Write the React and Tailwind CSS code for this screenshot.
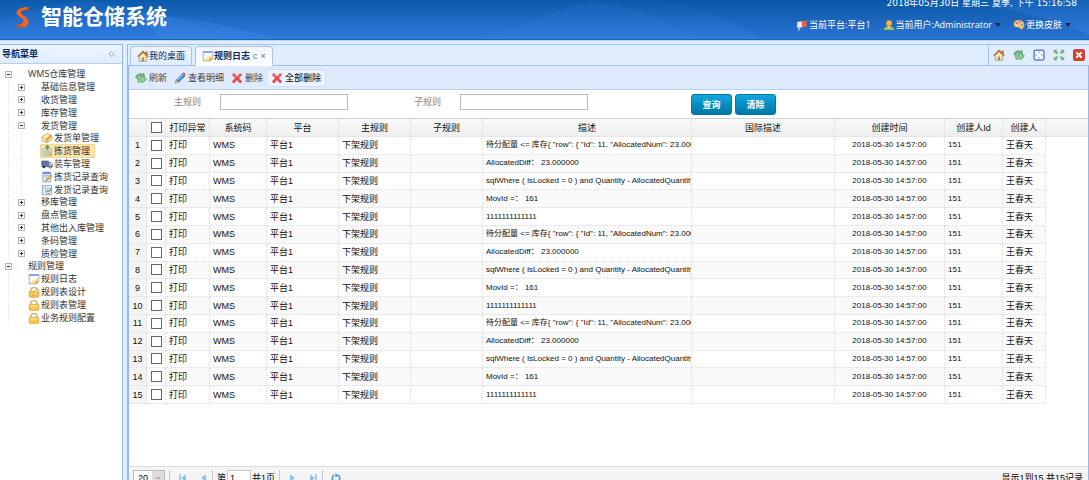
import { ChevronDown, ChevronsLeft } from "lucide-react";

const menu = [
  { level: 0, label: "WMS仓库管理", open: true },
  { level: 1, label: "基础信息管理", open: false },
  { level: 1, label: "收货管理", open: false },
  { level: 1, label: "库存管理", open: false },
  { level: 1, label: "发货管理", open: true },
  { level: 2, label: "发货单管理", icon: TagIcon },
  { level: 2, label: "拣货管理", icon: PickIcon, active: true },
  { level: 2, label: "装车管理", icon: TruckIcon },
  { level: 2, label: "拣货记录查询", icon: EditNoteIcon },
  { level: 2, label: "发货记录查询", icon: ReportIcon },
  { level: 1, label: "移库管理", open: false },
  { level: 1, label: "盘点管理", open: false },
  { level: 1, label: "其他出入库管理", open: false },
  { level: 1, label: "条码管理", open: false },
  { level: 1, label: "质检管理", open: false },
  { level: 0, label: "规则管理", open: true },
  { level: 1, label: "规则日志", icon: NoteIcon },
  { level: 1, label: "规则表设计", icon: LockEditIcon },
  { level: 1, label: "规则表管理", icon: LockIcon },
  { level: 1, label: "业务规则配置", icon: LockIcon },
];

const columns = [
  { key: "print", label: "打印异常", width: "w-[44px]", cell: "pl-[3px]" },
  { key: "system", label: "系统码", width: "w-[57px]", cell: "pl-[3px]" },
  { key: "platform", label: "平台", width: "w-[72px]", cell: "pl-[3px]" },
  { key: "mainRule", label: "主规则", width: "w-[72px]", cell: "pl-[3px]" },
  { key: "subRule", label: "子规则", width: "w-[72px]", cell: "pl-[3px]" },
  { key: "desc", label: "描述", width: "w-[209px]", cell: "pl-[3px] text-[8px]" },
  { key: "intlDesc", label: "国际描述", width: "w-[143px]", cell: "pl-[3px]" },
  { key: "createdAt", label: "创建时间", width: "w-[110px]", cell: "text-center text-[8px]" },
  { key: "creatorId", label: "创建人Id", width: "w-[58px]", cell: "pl-[3px] text-[8px]" },
  { key: "creator", label: "创建人", width: "w-[43px]", cell: "pl-[3px]" },
];

const descriptions = [
  '待分配量 <= 库存{ "row": { "Id": 11, "AllocatedNum": 23.000000, "Quantity": 23.000000 } }',
  "AllocatedDiff： 23.000000",
  "sqlWhere ( IsLocked = 0 ) and Quantity - AllocatedQuantity > 0",
  "MovId =： 161",
  "1111111111111",
];

const rows = Array.from({ length: 15 }, (_, i) => ({
  id: i + 1,
  print: "打印",
  system: "WMS",
  platform: "平台1",
  mainRule: "下架规则",
  subRule: "",
  desc: descriptions[i % 5],
  intlDesc: "",
  createdAt: "2018-05-30 14:57:00",
  creatorId: "151",
  creator: "王春天",
}));

/* ---------- icons ---------- */

function Svg({ children, className = "w-3 h-3" }) {
  return (
    <svg viewBox="0 0 16 16" className={`${className} shrink-0`} fill="none" aria-hidden="true">
      {children}
    </svg>
  );
}

function Logo() {
  return (
    <svg viewBox="0 0 16 22" className="w-4 h-[22px] shrink-0" aria-hidden="true">
      <path
        d="M14 1C9 1 2.500 3 2.500 7c0 3.500 7 4.500 7 8 0 2.500-3.500 3.500-8.500 4.500 1.500 1 5 1.500 7.500 1.500 4 0 6-2 6-5.500C14.500 11 7 9.500 7 6.500 7 4.500 11 4 13.500 3.500z"
        fill="#f2641c"
      />
      <path d="M14.500 0v6l-3-3zM1 19.500c3-.8 5-1 7-.5l2 2.500c-4 .3-7-.5-9-2z" fill="#e2520f" />
    </svg>
  );
}

function HomeIcon() {
  return (
    <Svg>
      <path d="M3 8.500 8 3.500l5 5V15H3z" fill="#fbe6b5" stroke="#b98d4c" />
      <path d="M1 9 8 2l7 7" stroke="#a8752f" strokeWidth="2" />
      <path d="M11.500 2h2.500v4.500l-2.500-2z" fill="#c0563f" />
      <path d="M6.500 10h3v5h-3z" fill="#7e8fbe" />
    </Svg>
  );
}

function RefreshIcon() {
  return (
    <Svg>
      <path d="M1 7.500C1.500 3 6.500 1 10 3l1.500-1.500 1.500 5.500-6 .3 1.500-1.600C6.500 4.800 4.500 5.500 4 8z" fill="#74bd78" stroke="#438f4d" strokeWidth=".8" />
      <path d="M15 8.500c-.5 4.500-5.500 6.500-9 4.500l-1.500 1.500L3 9l6-.3-1.500 1.600c2 .9 4 .2 4.500-2.300z" fill="#93d195" stroke="#438f4d" strokeWidth=".8" />
    </Svg>
  );
}

function PencilIcon() {
  return (
    <Svg>
      <path d="M3 10.500 11 2l3.500 3.500-8.500 8z" fill="#3f8fe0" stroke="#2461a8" strokeWidth=".8" />
      <path d="m4.200 10.500 7.300-7.500" stroke="#a5d3fa" strokeWidth="1.500" />
      <path d="m11 2 1.500-1.200c1-.6 3.200 1.400 2.600 2.600l-.6 2.100z" fill="#d9534f" />
      <path d="M3 10.500 1.200 15 6 13.500z" fill="#f4d7a0" stroke="#6b5534" strokeWidth=".6" />
    </Svg>
  );
}

function CrossIcon() {
  return (
    <Svg>
      <path d="m2.500 2.500 11 11.500M13.500 2.500 2.500 14" stroke="#e5484a" strokeWidth="3.600" />
      <path d="m3 2.500 4.500 4.500M13 2.500 8.500 7" stroke="#f7928c" strokeWidth="1.200" />
    </Svg>
  );
}

function NoteIcon() {
  return (
    <Svg>
      <path d="M1.500 2h13v9l-3.500 3.500H1.500z" fill="#fff" stroke="#7596c8" />
      <path d="M1.500 1.500h13V4h-13z" fill="#86aae0" />
      <path d="M2 12.500 13.800 6v5L11 14.500H3z" fill="#f8cf5d" opacity=".65" />
      <path d="M10 15.500V11h5z" fill="#e8a02c" />
    </Svg>
  );
}

function TagIcon() {
  return (
    <Svg>
      <path d="M1.500 6 8 2l6.500 3v5L8 14.500l-6.500-3z" fill="#fdf0c9" stroke="#c49a52" />
      <path d="m2 6.500 6 3 6-4M8 9.500v5" stroke="#dfa94c" />
      <path d="m7 10 5-6 2 1.500-5 6-2.500 1z" fill="#f4b73e" stroke="#a97028" strokeWidth=".6" />
    </Svg>
  );
}

function PickIcon() {
  return (
    <Svg>
      <path d="M2 5h12v9.500H2z" fill="#dbe3d0" stroke="#a3b09a" />
      <path d="M8.500 1v6M6 3.500 8.500 1 11 3.500" stroke="#58a34e" strokeWidth="2" />
      <path d="M4 8.500h8M4 10.500h8M4 12.500h5" stroke="#8fa98a" strokeWidth=".8" />
      <path d="M10 10h4v4h-4z" fill="#e6b052" />
    </Svg>
  );
}

function TruckIcon() {
  return (
    <Svg>
      <path d="M1 4h9v7.500H1z" fill="#5a73a8" stroke="#3a4d7a" strokeWidth=".8" />
      <path d="M10 6h3l2.500 2.500v3H10z" fill="#a9c7ef" stroke="#49608e" strokeWidth=".8" />
      <circle cx="4" cy="12" r="1.800" fill="#333" />
      <circle cx="12.500" cy="12" r="1.800" fill="#e0862f" stroke="#444" strokeWidth=".6" />
    </Svg>
  );
}

function EditNoteIcon() {
  return (
    <Svg>
      <path d="M2.500 1.500h10v13h-10z" fill="#e8f0fc" stroke="#6d8fc4" />
      <path d="M2.500 1.500h10V4h-10z" fill="#5f8fd6" />
      <path d="M4.500 6h6M4.500 8h4" stroke="#8ba6cf" />
      <path d="m6 13.500 1-3L13.500 5l1.500 2-6.500 5.500z" fill="#f4b73e" stroke="#a97028" strokeWidth=".6" />
    </Svg>
  );
}

function ReportIcon() {
  return (
    <Svg>
      <path d="M2 2h12v12.500H2z" fill="#e4eefa" stroke="#7d9cc8" />
      <path d="M2 5.500h12M6 2v12" stroke="#a5bddd" />
      <path d="m7 11 2-2.500L11 10l3-5" stroke="#4aa564" strokeWidth="1.500" />
      <path d="M8 12h4v1.500H8z" fill="#e28a55" />
    </Svg>
  );
}

function LockIcon() {
  return (
    <Svg>
      <path d="M4 8V5.500c0-4.500 8-4.500 8 0V8" stroke="#cdb98d" strokeWidth="2" />
      <rect x="1.500" y="7" width="13" height="8" rx="1.500" fill="#fac84e" stroke="#d99a2e" />
      <path d="M3 9h10" stroke="#fdeab1" strokeWidth="1.500" />
    </Svg>
  );
}

function LockEditIcon() {
  return (
    <Svg>
      <path d="M4 8V5.500c0-4.500 8-4.500 8 0V8" stroke="#cdb98d" strokeWidth="2" />
      <rect x="1.500" y="7" width="13" height="8" rx="1.500" fill="#fac84e" stroke="#d99a2e" />
      <path d="m7 11 5.500-7 2.500 2-5.500 6.500-3 1z" fill="#fce59c" stroke="#b97a24" strokeWidth=".7" />
    </Svg>
  );
}

function FlagIcon() {
  return (
    <Svg>
      <path d="M5 11 3.500 15.500" stroke="#cfd9e8" strokeWidth="1.500" />
      <path d="M1.500 4.500C4 2 7 4.500 9 2.500v8c-2 2-5-.5-7.500 1.500z" fill="#f1e4e2" />
      <path d="M8 2.800c2-1 4 .2 6.500-1.300v8c-2.500 2-4.500.5-6.500 1.500z" fill="#e4604a" />
    </Svg>
  );
}

function UserIcon() {
  return (
    <Svg>
      <path d="M1 14.500c0-6.500 14-6.500 14 0z" fill="#9ec14a" />
      <path d="M5.500 9.500h5L8 13z" fill="#f6d896" />
      <circle cx="8" cy="5.500" r="4" fill="#f2b452" stroke="#a5742c" strokeWidth=".7" />
    </Svg>
  );
}

function PaletteIcon() {
  return (
    <Svg>
      <path d="M8 1.500c4 0 7 2.500 7 6S12 14 10.500 13.500 9.500 11 7.500 11 1 11 1 7s3-5.500 7-5.500z" fill="#f5c489" stroke="#c98a3e" strokeWidth=".8" />
      <circle cx="5" cy="5.500" r="1.300" fill="#e2573c" />
      <circle cx="9" cy="4.300" r="1.300" fill="#4e8be0" />
      <circle cx="12" cy="7.500" r="1.300" fill="#58a846" />
      <circle cx="4.500" cy="8.500" r="1" fill="#fff" />
    </Svg>
  );
}

function FrameIcon() {
  return (
    <Svg>
      <rect x="1.500" y="1.500" width="13" height="13" rx="1.500" fill="#f6f9ff" stroke="#5f80c4" strokeWidth="2" />
      <path d="M8 3 9.500 5h-3zM8 13l-1.500-2h3zM3 8l2-1.500v3zM13 8l-2-1.500v3z" fill="#7d99d1" />
    </Svg>
  );
}

function ExpandIcon() {
  return (
    <Svg>
      <path d="M1 1h5L4.500 2.500 7 5 5 7 2.500 4.500 1 6zM15 1v5l-1.500-1.500L11 7 9 5l2.500-2.500L10 1zM1 15v-5l1.500 1.500L5 9l2 2-2.500 2.500L6 15zM15 15h-5l1.500-1.500L9 11l2-2 2.500 2.500L15 10z" fill="#72b377" />
    </Svg>
  );
}

function CloseIcon() {
  return (
    <Svg>
      <rect x=".5" y=".5" width="15" height="15" rx="2.500" fill="#d8432b" stroke="#a12c1b" />
      <path d="m4.500 4.500 7 7m0-7-7 7" stroke="#fff" strokeWidth="2.600" />
    </Svg>
  );
}

function Expander({ open }) {
  return (
    <svg viewBox="0 0 7 7" className="w-[7px] h-[7px]" fill="none" aria-hidden="true">
      <rect x=".5" y=".5" width="6" height="6" fill="#f4f4f4" stroke="#b4b4b4" />
      <path d={open ? "M2 3.500h3" : "M2 3.500h3M3.500 2v3"} stroke="#333" />
    </svg>
  );
}

function PageArrow({ bar, flip }) {
  return (
    <Svg className={flip ? "w-[10px] h-[10px] rotate-180" : "w-[10px] h-[10px]"}>
      <path d="M12.500 2v12L5.500 8z" fill="#86bfe8" />
      {bar && <path d="M2 2h2.500v12H2z" fill="#86bfe8" />}
    </Svg>
  );
}

/* ---------- page parts ---------- */

function Header() {
  return (
    <header className="relative h-10 shrink-0 overflow-hidden bg-linear-to-b from-[#0a5aab] to-[#2e7ade] border-b border-[#1f62ad] flex items-start justify-between pl-3.5 pr-3 text-white">
      <svg viewBox="0 0 1089 40" preserveAspectRatio="none" className="absolute inset-0 w-full h-full" aria-hidden="true">
        <path d="M85 0c60 8 110 22 145 40H0V22C30 10 60 4 85 0z" fill="#3f8df0" opacity=".13" />
        <path d="M140 14c55 4 100 14 135 26H160z" fill="#4b96f5" opacity=".22" />
        <path d="M590 0c50 10 85 24 110 40H480z" fill="#3f8df0" opacity=".12" />
        <path d="M660 0c50 10 80 24 100 40h329V36C1060 22 1000 8 940 0z" fill="#0a4f9c" opacity=".15" />
        <path d="M1000 8c40 8 65 16 89 28V0h-89z" fill="#3f8df0" opacity=".2" />
      </svg>
      <div className="relative flex items-center gap-[11px] pt-1.5">
        <Logo />
        <h1 className="text-[21px] leading-[22px] font-bold">智能仓储系统</h1>
      </div>
      <div className="relative flex flex-col items-end -mt-1 text-[9px]">
        <p className="leading-[14px] font-['DejaVu_Sans','Noto_Sans_CJK_SC',sans-serif]">2018年05月30日 星期三 夏季, 下午 15:16:58</p>
        <div className="flex items-center gap-3 pt-2 pr-1.5 leading-[14px] font-['Open_Sans','Noto_Sans_CJK_SC',sans-serif]">
          <span className="flex items-center gap-px"><FlagIcon />当前平台:平台1</span>
          <button className="flex items-center gap-px">
            <UserIcon />当前用户:Administrator
            <Caret />
          </button>
          <button className="flex items-center gap-px">
            <PaletteIcon />更换皮肤
            <Caret />
          </button>
        </div>
      </div>
    </header>
  );
}

function Caret() {
  return <span className="ml-0.5 border-x-3 border-t-4 border-x-transparent border-t-[#10264a]" />;
}

function Sidebar() {
  return (
    <aside className="w-[123px] shrink-0 border-r border-t border-[#95b8e7] bg-white">
      <div className="h-[19px] flex items-center justify-between pl-0.5 pr-1 bg-linear-to-b from-[#eff5ff] to-[#e0ecff] border-b border-[#b5cdee]">
        <h2 className="font-bold text-[#0e2d5f]">导航菜单</h2>
        <button aria-label="收起菜单" className="text-[#8fb1e0]"><ChevronsLeft className="w-3 h-3" /></button>
      </div>
      <ul className="grid auto-rows-fr h-[256px] mt-1 pl-0.5 font-['Open_Sans','Noto_Sans_CJK_SC',sans-serif]">
        {menu.map((item, i) => {
          const Icon = item.icon;
          return (
            <li key={i} className="flex items-center min-h-0">
              {Array.from({ length: item.level }, (_, n) => (
                <span key={n} className="w-[13px] h-full shrink-0 flex justify-center">
                  <span className="border-l border-dotted border-gray-200" />
                </span>
              ))}
              <span className="w-[13px] shrink-0 flex justify-center">
                {!Icon && <Expander open={item.open} />}
              </span>
              <a href="#" className={`flex items-center h-3 ${item.active ? "bg-[#fbe3ae] outline outline-[#f5d696] pr-1" : ""}`}>
                <span className="w-[13px] shrink-0">{Icon && <Icon />}</span>
                <span className="whitespace-nowrap text-[#333]">{item.label}</span>
              </a>
            </li>
          );
        })}
      </ul>
    </aside>
  );
}

function Tabs() {
  return (
    <div className="h-[22px] shrink-0 flex items-end justify-between bg-[#e0ecff] border-y border-[#a5c2ea]">
      <div className="flex items-end gap-[3px] pl-0.5 -mb-px">
        <button className="h-5 px-1.5 flex items-center rounded-t border border-[#a5c2ea] bg-linear-to-b from-[#eff5ff] to-[#e0ecff] text-[#0e2d5f]">
          <HomeIcon />我的桌面
        </button>
        <button className="h-5 px-1.5 flex items-center rounded-t border border-b-white border-[#a5c2ea] bg-linear-to-b from-[#eff5ff] to-white font-bold text-[#0e2d5f]">
          <NoteIcon />规则日志
          <span className="pl-[3px] font-normal text-gray-500">c</span>
          <span className="pl-[3px] font-normal text-gray-500">×</span>
        </button>
      </div>
      <div className="h-5 flex items-center gap-2 px-1 border-l border-[#a5c2ea]">
        <button aria-label="主页"><HomeIcon /></button>
        <button aria-label="刷新"><RefreshIcon /></button>
        <button aria-label="窗口"><FrameIcon /></button>
        <button aria-label="全屏"><ExpandIcon /></button>
        <button aria-label="关闭"><CloseIcon /></button>
      </div>
    </div>
  );
}

function Toolbar() {
  return (
    <div className="h-6 shrink-0 flex items-center gap-[7px] px-1.5 bg-[#dfebfc] border-b border-[#b7d0f0] text-[#444]">
      <button className="flex items-center gap-0.5"><RefreshIcon />刷新</button>
      <button className="flex items-center gap-0.5"><PencilIcon />查看明细</button>
      <button className="flex items-center gap-0.5"><CrossIcon />删除</button>
      <button className="-ml-1 h-[18px] px-1 flex items-center gap-0.5 rounded-sm border border-[#cfe1f8] bg-[#eaf3ff] text-black">
        <CrossIcon />全部删除
      </button>
    </div>
  );
}

function SearchForm() {
  return (
    <form className="h-7 shrink-0 flex items-start pt-1 pl-[45px] leading-4 text-[#888]" onSubmit={(e) => e.preventDefault()}>
      <label htmlFor="mainRule" className="w-[46px]">主规则</label>
      <input id="mainRule" type="text" className="w-32 h-4 border border-[#bbb] bg-white" />
      <label htmlFor="subRule" className="w-[46px] ml-[66px]">子规则</label>
      <input id="subRule" type="text" className="w-32 h-4 border border-[#bbb] bg-white" />
      <div className="flex gap-[3px] ml-[103px]">
        <button className="w-[41px] h-[21px] rounded-[3px] border border-[#0076a3] bg-linear-to-b from-[#12a6e0] to-[#0078a5] text-white font-bold">查询</button>
        <button className="w-[41px] h-[21px] rounded-[3px] border border-[#0076a3] bg-linear-to-b from-[#12a6e0] to-[#0078a5] text-white font-bold">清除</button>
      </div>
    </form>
  );
}

function Check({ label }) {
  return (
    <input
      type="checkbox"
      aria-label={label}
      className="block mx-auto w-[11px] h-[11px] appearance-none border border-[#666] bg-white checked:bg-[#666]"
    />
  );
}

function LogTable() {
  return (
    <div className="flex-1 min-h-0 overflow-hidden border-t border-[#c9d3e2]">
      <table className="w-full table-fixed border-separate border-spacing-0 text-[#111]">
        <thead>
          <tr className="h-[18px] bg-linear-to-b from-[#fafafa] to-[#eeeeee]">
            <th className="w-[18px] p-0 border-r border-b border-dotted border-[#ddd]" />
            <th className="w-[19px] p-0 border-r border-b border-dotted border-[#ddd]"><Check label="全选" /></th>
            {columns.map((c) => (
              <th key={c.key} className={`${c.width} p-0 font-normal border-r border-b border-dotted border-[#ddd]`}>{c.label}</th>
            ))}
            <th className="p-0 border-b border-dotted border-[#ddd]" />
          </tr>
        </thead>
        <tbody className="h-[267px]">
          {rows.map((row) => (
            <tr key={row.id} className="group">
              <td className="p-0 text-center bg-[#f4f4f4] border-r border-b border-dotted border-[#ddd]">{row.id}</td>
              <td className="p-0 border-r border-b border-dotted border-[#ddd] group-even:bg-[#fafafa]"><Check label={`选择第${row.id}行`} /></td>
              {columns.map((c) => (
                <td
                  key={c.key}
                  className={`p-0 whitespace-pre overflow-hidden border-r border-b border-dotted border-[#ddd] group-even:bg-[#fafafa] ${c.cell}`}
                >
                  {row[c.key]}
                </td>
              ))}
              <td className="p-0" />
            </tr>
          ))}
        </tbody>
      </table>
    </div>
  );
}

function Pager() {
  return (
    <footer className="h-[22px] shrink-0 flex items-center justify-between pl-1 pr-[5px] bg-[#f4f4f4] border-t border-[#ddd]">
      <div className="flex items-center">
        <div className="relative">
          <select aria-label="每页条数" className="block w-8 h-4 pl-1 appearance-none border border-[#bbb] bg-white">
            <option>20</option>
            <option>50</option>
          </select>
          <span className="absolute inset-y-px right-px w-3 flex items-center justify-center bg-[#dcdcdc] pointer-events-none">
            <ChevronDown className="w-2 h-2 text-[#666]" />
          </span>
        </div>
        <span className="h-4 mx-1 border-l border-[#ccc]" />
        <div className="flex items-center gap-2.5 pl-1">
          <button aria-label="首页"><PageArrow bar /></button>
          <button aria-label="上一页"><PageArrow /></button>
        </div>
        <span className="h-4 mx-1 border-l border-[#ccc]" />
        <label htmlFor="page">第</label>
        <input id="page" type="text" defaultValue="1" className="w-6 h-4 pl-0.5 mx-px border border-[#c8c8c8] bg-white" />
        <span>共1页</span>
        <span className="h-4 mx-1 border-l border-[#ccc]" />
        <div className="flex items-center gap-2.5 pl-1">
          <button aria-label="下一页"><PageArrow flip /></button>
          <button aria-label="末页"><PageArrow bar flip /></button>
        </div>
        <span className="h-4 mx-1 border-l border-[#ccc]" />
        <button aria-label="刷新列表" className="pl-1">
          <Svg className="w-[10px] h-[10px]">
            <path d="M5 3.500a6 6 0 1 0 6 0" stroke="#3d9bd8" strokeWidth="2.500" />
            <path d="M7 0v7l5-3z" fill="#3d9bd8" />
          </Svg>
        </button>
      </div>
      <p>显示1到15,共15记录</p>
    </footer>
  );
}

export default function App() {
  return (
    <div className="h-screen overflow-hidden bg-[#e0ecff] font-['Liberation_Sans','Noto_Sans_CJK_SC',sans-serif] text-[9px] leading-3">
      <div className="h-[calc(100vh+8px)] flex flex-col">
        <Header />
        <div className="flex-1 min-h-0 flex gap-1 pt-[3px] border-t border-[#b9d6fa]">
          <Sidebar />
          <main className="flex-1 min-w-0 flex flex-col border-l border-[#95b8e7]">
            <Tabs />
            <div className="flex-1 min-h-0 flex flex-col bg-white border-x border-[#95b8e7]">
              <Toolbar />
              <SearchForm />
              <LogTable />
              <Pager />
            </div>
          </main>
        </div>
      </div>
    </div>
  );
}
